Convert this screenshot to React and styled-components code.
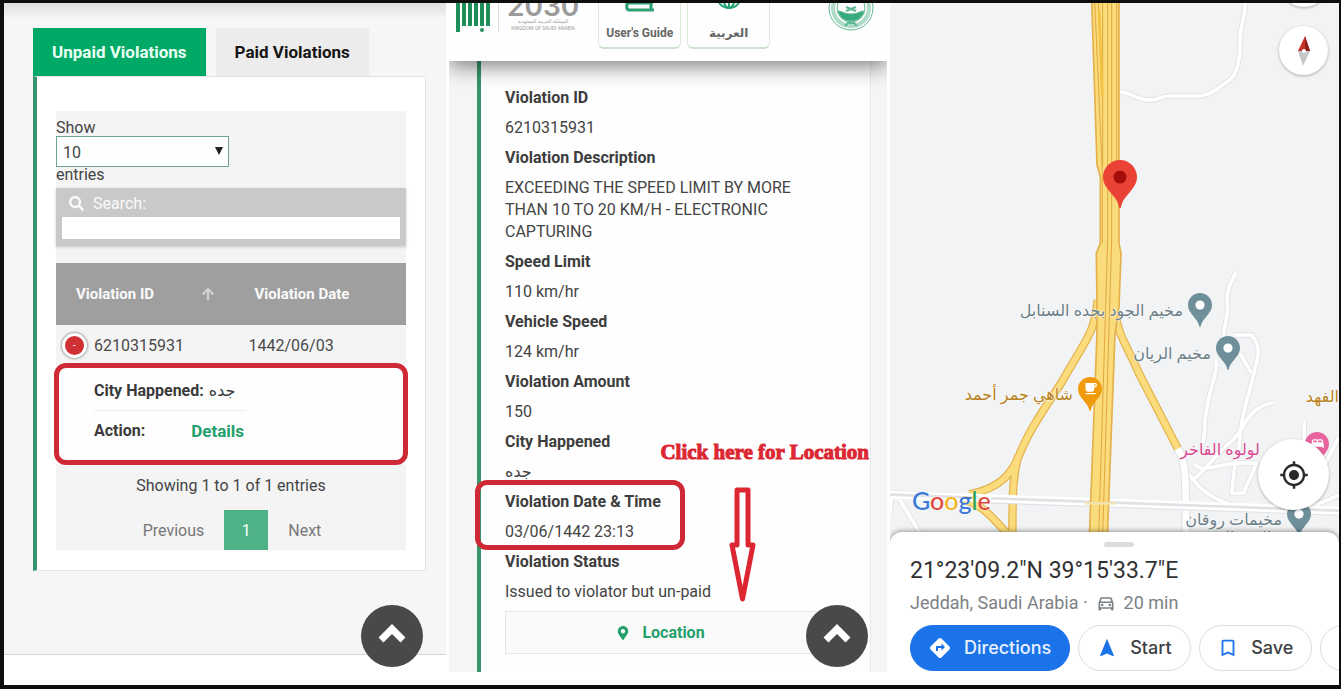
import styled, { createGlobalStyle } from "styled-components";
import { FaArrowUp, FaSearch, FaMapMarkerAlt } from "react-icons/fa";
import {
  MdBed,
  MdBookmarkBorder,
  MdDirections,
  MdLocalCafe,
  MdMyLocation,
  MdNavigation,
  MdOutlineDirectionsCar,
} from "react-icons/md";

const GlobalStyle = createGlobalStyle`
  * {
    box-sizing: border-box;
  }

  body {
    margin: 0;
    background: #0e0f0d;
    color: #444;
    font-family: Roboto, "Noto Sans", "DejaVu Sans", sans-serif;
    font-size: 16px;
  }

  button, input, select {
    font: inherit;
    color: inherit;
  }
`;

const Board = styled.main`
  display: grid;
  grid-template-columns: 442fr 438fr 449fr;
  gap: 3px;
  min-height: 100vh;
  border: solid #0e0f0d;
  border-width: 3px 2px 4px 4px;
  background: #fff;
`;

const Panel = styled.section`
  position: relative;
  display: flex;
  flex-direction: column;
  min-width: 0;
  overflow: hidden;
`;

/* ---------- violations list ---------- */

const ListBody = styled.div`
  flex: 1;
  padding: 25px 20px 0 29px;
  background: linear-gradient(#dedede, #f6f6f6 16px);
`;

const Tabs = styled.div`
  display: flex;
  gap: 10px;
`;

const Tab = styled.button`
  height: 48px;
  padding: 0 19px;
  border: 0;
  background: ${(props) => (props.$active ? "#00a965" : "#ececec")};
  color: ${(props) => (props.$active ? "#e9fff4" : "#161616")};
  font-size: 17px;
  font-weight: 700;
`;

const ListCard = styled.div`
  padding: 34px 19px 20px;
  border: 1px solid #e4e4e4;
  border-left: 4px solid #36956c;
  background: #fff;
`;

const TableWrap = styled.div`
  padding-top: 9px;
  background: #f4f4f4;
`;

const LengthLabel = styled.label`
  display: flex;
  flex-direction: column;
  align-items: flex-start;
  line-height: 16px;
`;

const SelectBox = styled.span`
  position: relative;
  width: 173px;

  &::after {
    content: "";
    position: absolute;
    top: 11px;
    right: 6px;
    border: 4px solid transparent;
    border-top: 8px solid #222;
    border-bottom: 0;
  }
`;

const Select = styled.select`
  appearance: none;
  display: block;
  width: 100%;
  height: 31px;
  padding: 3px 6px 0;
  border: 1px solid #6fa393;
  border-radius: 0;
  background: #fcfffd;
`;

const SearchBox = styled.label`
  display: block;
  margin-top: 5px;
  padding: 6px 6px 7px;
  background: #c9c9c9;
  box-shadow: 0 1px 3px rgba(0, 0, 0, 0.2);
  color: #fafafa;
`;

const SearchTitle = styled.span`
  display: flex;
  align-items: center;
  gap: 9px;
  height: 18px;
  margin: 0 7px 5px;
`;

const SearchInput = styled.input`
  display: block;
  width: 100%;
  height: 22px;
  border: 0;
  background: #fff;
`;

const Table = styled.table`
  width: 100%;
  margin-top: 17px;
  border-collapse: collapse;
  table-layout: fixed;
`;

const Th = styled.th`
  width: ${(props) => props.$width};
  height: 62px;
  padding: 0 20px;
  background: #9f9f9f;
  color: #fafafa;
  font-size: 15px;
  font-weight: 700;
  text-align: left;
`;

const SortTitle = styled.span`
  display: flex;
  align-items: center;
  justify-content: space-between;
`;

const Td = styled.td`
  height: 41px;
  padding: 0 0 0 14px;
  color: #4a4a4a;
`;

const IdCell = styled.span`
  display: flex;
  align-items: center;
  gap: 7px;
  margin-left: -8px;
`;

const Collapse = styled.button`
  width: 25px;
  height: 25px;
  padding: 0;
  border: 3px solid #fff;
  border-radius: 50%;
  background: #d02f33;
  box-shadow: 0 0 3px #555;
  color: #fff;
  font-size: 10px;
  line-height: 16px;
`;

const ChildCell = styled.td`
  position: relative;
  height: 98px;
  padding: 4px 38px 0;
  background: #fefefe;
  color: #3a3a3a;
  vertical-align: top;
`;

const Marked = styled.span`
  position: absolute;
  inset: ${(props) => props.$inset};
  border: 5px solid #cf2935;
  border-radius: 12px;
  pointer-events: none;
`;

const ChildRow = styled.div`
  display: flex;
  width: 152px;
  gap: ${(props) => props.$gap};
  height: 40px;
  align-items: center;
  white-space: nowrap;

  & + & {
    border-top: 1px solid #ececec;
  }
`;

const DetailsLink = styled.a`
  color: #23a06c;
  font-size: 17px;
  font-weight: 700;
  text-decoration: none;
`;

const Info = styled.p`
  margin: 0;
  padding-top: 11px;
  line-height: 22px;
  text-align: center;
`;

const Pager = styled.nav`
  display: flex;
  justify-content: center;
  margin-top: 13px;
  padding-left: 2px;
`;

const PageButton = styled.button`
  height: 40px;
  min-width: 44px;
  padding: 0 ${(props) => (props.$current ? "12px" : "20px")};
  border: 0;
  background: ${(props) => (props.$current ? "#4fb286" : "none")};
  color: ${(props) => (props.$current ? "#f2fff8" : "#777")};
`;

const ListFooter = styled.footer`
  height: 31px;
  border-top: 1px solid #d4d4d4;
  background: #fff;
`;

const ToTop = styled.button`
  position: absolute;
  right: ${(props) => props.$right};
  bottom: 18px;
  display: grid;
  place-items: center;
  width: 62px;
  height: 62px;
  padding: 0 0 6px;
  border: 0;
  border-radius: 50%;
  background: #494949;
  color: #fff;
`;

/* ---------- violation details ---------- */

const SiteHeader = styled.header`
  position: relative;
  z-index: 1;
  display: flex;
  align-items: flex-end;
  height: 58px;
  padding: 0 13px 12px 7px;
  background: #fefefe;
  box-shadow: 0 4px 22px rgba(0, 0, 0, 0.55);
`;

const Brand = styled.div`
  display: flex;
  align-items: flex-end;
  gap: 8px;
  height: 40px;
  margin-bottom: 17px;
  color: #9b9b9b;
`;

const BrandText = styled.div`
  padding-left: 8px;
  border-left: 1px solid #ddd;
  font-size: 5px;
  line-height: 7px;
  text-align: center;
  white-space: nowrap;
`;

const BrandYear = styled.div`
  font: 600 28px/24px Inter, sans-serif;
`;

const HeaderButton = styled.button`
  display: flex;
  flex-direction: column;
  align-items: center;
  justify-content: space-between;
  width: 83px;
  height: 70px;
  margin-left: ${(props) => props.$gap};
  padding: 0 0 6px;
  border: 1px solid #dcebdc;
  border-bottom: 2px solid #cfe0cf;
  border-radius: 6px;
  background: #fefefe;
  color: #666;
  font-size: 12px;
  font-weight: 700;
  line-height: 16px;
`;

const Emblem = styled.svg`
  margin: 0 0 18px auto;
`;

const DetailBody = styled.div`
  flex: 1;
  margin-bottom: 13px;
  padding: 0 16px 0 28px;
  background: #f5f5f5;
`;

const DetailCard = styled.div`
  height: 100%;
  padding: 26px 48px 17px 24px;
  border-left: 4px solid #36956c;
  border-right: 1px solid #e8e8e8;
  background: #fefefe;
`;

const Fields = styled.dl`
  margin: 0;
`;

const Field = styled.div`
  position: relative;
`;

const FieldName = styled.dt`
  margin-bottom: 8px;
  color: #3d3d3d;
  font-weight: 700;
  line-height: 22px;
`;

const FieldValue = styled.dd`
  margin: 0 0 8px;
  line-height: 22px;
`;

const LocationButton = styled.button`
  display: flex;
  align-items: center;
  justify-content: center;
  gap: 12px;
  width: 100%;
  height: 43px;
  padding-right: 12px;
  border: 1px solid #e6e6e6;
  background: #fafafa;
  color: #23a06c;
  font-weight: 700;
`;

const Hint = styled.div`
  position: absolute;
  top: 435px;
  right: 18px;
  display: flex;
  flex-direction: column;
  align-items: center;
  gap: 21px;
  color: #dc2733;
  font: 700 21px/28px "Liberation Serif", serif;
  -webkit-text-stroke: 1px #dc2733;
  white-space: nowrap;

  svg {
    margin-right: 44px;
  }
`;

/* ---------- map ---------- */

const MapArea = styled.div`
  position: relative;
  flex: 1;
  min-height: 541px;
  overflow: hidden;
  background: #f1f3f4;
`;

const Roads = styled.svg`
  position: absolute;
  top: 0;
  left: 0;
  width: 100%;
  height: 100%;
`;

const Place = styled.div`
  position: absolute;
  top: ${(props) => props.$top};
  right: ${(props) => props.$right};
  display: flex;
  align-items: center;
  gap: 5px;
  color: ${(props) => props.$color};
  font-family: "Noto Sans", "DejaVu Sans", sans-serif;
  font-size: 16px;
  line-height: 20px;
  text-shadow: 0 0 2px #fff, 0 0 2px #fff;
  white-space: nowrap;
`;

const HiddenGap = styled.span`
  width: 35px;
`;

const PinBox = styled.span`
  position: relative;
  display: block;
  height: ${(props) => props.$size * 1.42}px;

  & > svg + svg {
    position: absolute;
    top: 4px;
    left: 5px;
    color: #fff;
  }
`;

const MainPin = styled.div`
  position: absolute;
  top: 157px;
  left: 213px;
`;

const RoundButton = styled.button`
  position: absolute;
  top: ${(props) => props.$top};
  right: ${(props) => props.$right};
  display: grid;
  place-items: center;
  width: ${(props) => props.$size};
  height: ${(props) => props.$size};
  padding: 0;
  border: 0;
  border-radius: 50%;
  background: #fff;
  box-shadow: 0 1px 3px rgba(0, 0, 0, 0.3);
  color: #2b2b2b;
`;

const Google = styled.div`
  position: absolute;
  top: 480px;
  left: 22px;
  font: 500 25px/34px Lato, sans-serif;
  text-shadow: 0 0 2px #fff;
`;

const Letter = styled.span`
  color: ${(props) => props.$color};
`;

const Sheet = styled.div`
  position: relative;
  margin-top: -12px;
  padding: 10px 0 14px 20px;
  border-radius: 12px 12px 0 0;
  background: #fff;
  box-shadow: 0 -1px 5px rgba(0, 0, 0, 0.4);
`;

const Handle = styled.div`
  width: 30px;
  height: 5px;
  margin: 0 auto 10px 194px;
  border-radius: 3px;
  background: #dcdcdc;
`;

const Coords = styled.h2`
  margin: 0;
  color: #2f3133;
  font: 400 23px/28px Roboto, sans-serif;
`;

const Region = styled.p`
  display: flex;
  align-items: center;
  gap: 8px;
  margin: 7px 0 11px;
  color: #7d8185;
  font-size: 18px;
  line-height: 22px;
`;

const Actions = styled.div`
  display: flex;
  gap: 8px;
  overflow: hidden;
`;

const Action = styled.button`
  display: flex;
  flex: none;
  align-items: center;
  gap: 12px;
  height: 46px;
  min-width: 113px;
  padding: 0 18px 0 17px;
  border: 1px solid ${(props) => (props.$primary ? "#1a73e8" : "#dadce0")};
  border-radius: 23px;
  background: ${(props) => (props.$primary ? "#1a73e8" : "#fff")};
  color: ${(props) => (props.$primary ? "#e8f1ff" : "#3c4043")};
  font: 500 18px/22px Inter, sans-serif;

  svg {
    color: ${(props) => (props.$primary ? "#fff" : "#1a73e8")};
  }
`;

const fields = [
  ["Violation ID", "6210315931"],
  [
    "Violation Description",
    "EXCEEDING THE SPEED LIMIT BY MORE THAN 10 TO 20 KM/H - ELECTRONIC CAPTURING",
  ],
  ["Speed Limit", "110 km/hr"],
  ["Vehicle Speed", "124 km/hr"],
  ["Violation Amount", "150"],
  ["City Happened", "جده"],
  ["Violation Date & Time", "03/06/1442 23:13", true],
  ["Violation Status", "Issued to violator but un-paid"],
];

const places = [
  { name: "مخيم الجود بجده السنابل", top: "290px", right: "127px", color: "#6d7f88", pin: "#6f8f9b" },
  { name: "مخيم الريان", top: "333px", right: "99px", color: "#6d7f88", pin: "#6f8f9b" },
  { name: "شاهي جمر أحمد", top: "374px", right: "237px", color: "#b98220", pin: "#f09a0c", icon: MdLocalCafe },
  { name: "مخيمات روقان", top: "499px", right: "28px", color: "#6d7f88", pin: "#6f8f9b" },
];

const google = [
  ["G", "#3b78d8"],
  ["o", "#e0483e"],
  ["o", "#efb51c"],
  ["g", "#3b78d8"],
  ["l", "#2fa14f"],
  ["e", "#e0483e"],
];

const Pin = ({ size, color, hole = "#fff", icon: Icon }) => (
  <PinBox $size={size}>
    <svg width={size} height={size * 1.42} viewBox="0 0 24 34">
      <path
        d="M12 0C5.400 0 0 5.400 0 12c0 4.400 2.300 7.200 5 10.600C7.600 25.900 10.500 28.500 11.300 33.200c.2 1.100 1.200 1.100 1.400 0C13.500 28.500 16.400 25.900 19 22.600c2.700-3.400 5-6.200 5-10.600C24 5.400 18.600 0 12 0z"
        fill={color}
      />
      {!Icon && <circle cx="12" cy="12" r="4.600" fill={hole} />}
    </svg>
    {Icon && <Icon size={15} />}
  </PinBox>
);

const tracks =
  "M700 275c40 0 45 25 95 25 30 0 30-12 60-12h90c40-5 60-30 90-48 20-20 32-60 30-120 0-50 15-60 16-111M1052 818c-40 80-20 70-25 120-10 60-15 70-10 100M995 1080c0 60-20 70-30 150-10 40 0 60-15 110M1050 1005h50c30 40 20 60 10 100-20 100-40 110-50 260M1065 1060l35 60M1165 1208c-90 20-80 80-130 120-50 40-60 70-110 110M925 1390c40 40 60-10 190 0l-40 90h-35l15-130M910 1420c40 60 80 80 160 105 200 10 200 0 292-40M1258 1265v90M1362 1310l-60 120M45 1500l60 100M20 1480l-5 60";

const ramps =
  "M638 900c-10 100-30 110-110 250-60 90-100 150-125 215-25 60-60 100-150 118M400 1365c-15 60-18 90-18 270M225 1495c70 20 90 50 150 115M692 940c5 60 30 90 70 180l116 225";

const MapRoads = () => (
  <Roads viewBox="15 9 1347 1623" preserveAspectRatio="xMidYMin slice" fill="none" strokeLinejoin="round">
    <path d={tracks} stroke="#dfe1e4" strokeWidth="16" />
    <path d={tracks} stroke="#fff" strokeWidth="11" />

    <path d="M878 1345c25 40 25 70 25 290" stroke="#dfe1e4" strokeWidth="26" />
    <path d="M878 1345c25 40 25 70 25 290" stroke="#fff" strokeWidth="20" />

    <path d={ramps} stroke="#e3b04a" strokeWidth="25" />
    <path d={ramps} stroke="#fbdc7c" strokeWidth="18" />

    {/* cross road */}
    <path d="M15 1482l220 8M320 1500l300 10 742 26" strokeWidth="22" stroke="#dfe1e4" />
    <path d="M15 1476l1347 48M15 1492l1347 48" stroke="#fff" strokeWidth="8" />

    {/* highway */}
    <path
      d="M618 0h84v730l6 30-6 160-12 80-24 640h-54l24-640v-90l-2-150 12-30V530l-10-35L620 0z"
      fill="#fbdc7c"
      stroke="#e3b04a"
      strokeWidth="5"
    />
    <path
      d="M668 0v720l-6 200-22 720M680 0v720l-6 200-22 720M629 0l23 520v210M640 0l10 280M653 0v500M695 0v480"
      stroke="#e0a83c"
      strokeWidth="3"
    />
    <path d="M642 30l10 260" stroke="#f4c244" strokeWidth="8" />
    <path d="M600 1510h90" stroke="#f3e3ae" strokeWidth="8" />
  </Roads>
);

const UpIcon = () => (
  <svg width="28" height="20" viewBox="0 0 28 20" fill="none" stroke="currentColor" strokeWidth="7">
    <path d="M3 17L14 6l11 11" />
  </svg>
);

const ViolationList = () => (
  <Panel>
    <ListBody>
      <Tabs>
        <Tab $active>Unpaid Violations</Tab>
        <Tab>Paid Violations</Tab>
      </Tabs>
      <ListCard>
        <TableWrap>
          <LengthLabel>
            Show
            <SelectBox>
              <Select defaultValue="10">
                <option>10</option>
                <option>25</option>
                <option>50</option>
              </Select>
            </SelectBox>
            entries
          </LengthLabel>
          <SearchBox>
            <SearchTitle>
              <FaSearch size={15} />
              Search:
            </SearchTitle>
            <SearchInput type="text" />
          </SearchBox>
          <Table>
            <thead>
              <tr>
                <Th $width="51%">
                  <SortTitle>
                    Violation ID
                    <FaArrowUp size={14} color="#d4d4d4" />
                  </SortTitle>
                </Th>
                <Th>Violation Date</Th>
              </tr>
            </thead>
            <tbody>
              <tr>
                <Td>
                  <IdCell>
                    <Collapse aria-label="Collapse row">-</Collapse>
                    6210315931
                  </IdCell>
                </Td>
                <Td>1442/06/03</Td>
              </tr>
              <tr>
                <ChildCell colSpan="2">
                  <ChildRow $gap="5px">
                    <b>City Happened:</b>
                    <span>جده</span>
                  </ChildRow>
                  <ChildRow $gap="46px">
                    <b>Action:</b>
                    <DetailsLink href="#details">Details</DetailsLink>
                  </ChildRow>
                  <Marked $inset="-3px -2px -1px" />
                </ChildCell>
              </tr>
            </tbody>
          </Table>
          <Info>Showing 1 to 1 of 1 entries</Info>
          <Pager>
            <PageButton>Previous</PageButton>
            <PageButton $current>1</PageButton>
            <PageButton>Next</PageButton>
          </Pager>
        </TableWrap>
      </ListCard>
    </ListBody>
    <ListFooter />
    <ToTop $right="23px" aria-label="Back to top">
      <UpIcon />
    </ToTop>
  </Panel>
);

const ViolationDetails = () => (
  <Panel>
    <SiteHeader>
      <Brand>
        <svg width="34" height="40" viewBox="0 0 34 40" fill="#1f8f5a">
          <path d="M0 0h4v40H0zM6 0h4v34H6zM12 0h4v34h-4zM18 0h4v34h-4zM24 0h4v34h-4zM30 0h4v34h-4z" />
          <circle cx="26" cy="38" r="2" />
        </svg>
        <BrandText>
          <BrandYear>2030</BrandYear>
          <div>المملكة العربية السعودية</div>
          <div>KINGDOM OF SAUDI ARABIA</div>
        </BrandText>
      </Brand>
      <HeaderButton $gap="19px">
        <svg width="30" height="33" viewBox="0 0 30 33" fill="none" stroke="#2f9e72" strokeWidth="3">
          <path d="M28 23H4c-3 0-3 7 0 7h25M26 23v7M2 26V4h26v19" />
        </svg>
        User&apos;s Guide
      </HeaderButton>
      <HeaderButton $gap="6px">
        <svg width="28" height="30" viewBox="0 0 28 30" fill="none" stroke="#27a376" strokeWidth="2">
          <circle cx="14" cy="16" r="12" />
          <ellipse cx="14" cy="16" rx="6" ry="12" />
          <path d="M14 4v24M2 16h24M4 22h20" />
        </svg>
        العربية
      </HeaderButton>
      <Emblem width="46" height="46" viewBox="0 0 46 46" fill="none" stroke="#5fb893">
        <circle cx="23" cy="23" r="22" strokeWidth="1" />
        <circle cx="23" cy="23" r="18" strokeWidth="4" strokeOpacity="0.5" />
        <circle cx="23" cy="23" r="14" strokeWidth="1" />
        <path d="M10 26c4 0 6 3 13 3s9-3 13-3c-2 7-7 10-13 10s-11-3-13-10z" fill="#35ab7e" />
        <path d="M18 22l10 4M28 22l-10 4M17 41l3-3h6l3 3" strokeWidth="2" />
      </Emblem>
    </SiteHeader>
    <DetailBody>
      <DetailCard>
        <Fields>
          {fields.map(([name, value, marked]) => (
            <Field key={name}>
              <FieldName>{name}</FieldName>
              <FieldValue>{value}</FieldValue>
              {marked && <Marked $inset="-11px 137px -7px -30px" />}
            </Field>
          ))}
        </Fields>
        <LocationButton>
          <FaMapMarkerAlt size={14} />
          Location
        </LocationButton>
      </DetailCard>
    </DetailBody>
    <Hint>
      Click here for Location
      <svg width="27" height="116" viewBox="0 0 27 116" fill="#fff" stroke="#dc2733" strokeWidth="5" strokeLinejoin="round">
        <path d="M8 3h11v55h5l-10.500 54L3 58h5z" />
      </svg>
    </Hint>
    <ToTop $right="19px" aria-label="Back to top">
      <UpIcon />
    </ToTop>
  </Panel>
);

const LocationMap = () => (
  <Panel>
    <MapArea>
      <MapRoads />
      {places.map((place) => (
        <Place key={place.name} $top={place.top} $right={place.right} $color={place.color}>
          {place.name}
          <Pin size={24} color={place.pin} icon={place.icon} />
        </Place>
      ))}
      <Place $top="383px" $right="0" $color="#b98220">الفهد</Place>
      <Place $top="429px" $right="10px" $color="#d8488f">
        لولوه الفاخر
        <HiddenGap />
        <Pin size={24} color="#e8639f" icon={MdBed} />
      </Place>
      <Place $top="524px" $right="60px" $color="#6d7f88">والاحتفالات</Place>
      <MainPin>
        <Pin size={34} color="#ea4335" hole="#a50e0e" />
      </MainPin>
      <RoundButton $top="-44px" $right="11px" $size="48px" aria-label="Layers" />
      <RoundButton $top="23px" $right="11px" $size="49px" aria-label="Compass">
        <svg width="12" height="30" viewBox="0 0 12 30">
          <path d="M7 0l5 15H0z" fill="#c5352c" />
          <path d="M7 0v15h5z" fill="#8e1f1a" />
          <path d="M0 15h12L5 30z" fill="#c4c7ca" />
          <circle cx="6" cy="15" r="2" fill="#fff" />
        </svg>
      </RoundButton>
      <RoundButton $top="436px" $right="10px" $size="71px" aria-label="My location">
        <MdMyLocation size={30} />
      </RoundButton>
      <Google>
        {google.map(([letter, color], index) => (
          <Letter key={index} $color={color}>{letter}</Letter>
        ))}
      </Google>
    </MapArea>
    <Sheet>
      <Handle />
      <Coords>21°23&apos;09.2&quot;N 39°15&apos;33.7&quot;E</Coords>
      <Region>
        Jeddah, Saudi Arabia ·
        <MdOutlineDirectionsCar size={20} />
        20 min
      </Region>
      <Actions>
        <Action $primary>
          <MdDirections size={24} />
          Directions
        </Action>
        <Action>
          <MdNavigation size={22} />
          Start
        </Action>
        <Action>
          <MdBookmarkBorder size={22} />
          Save
        </Action>
        <Action aria-label="Share" />
      </Actions>
    </Sheet>
  </Panel>
);

export default function App() {
  return (
    <>
      <GlobalStyle />
      <Board>
        <ViolationList />
        <ViolationDetails />
        <LocationMap />
      </Board>
    </>
  );
}
